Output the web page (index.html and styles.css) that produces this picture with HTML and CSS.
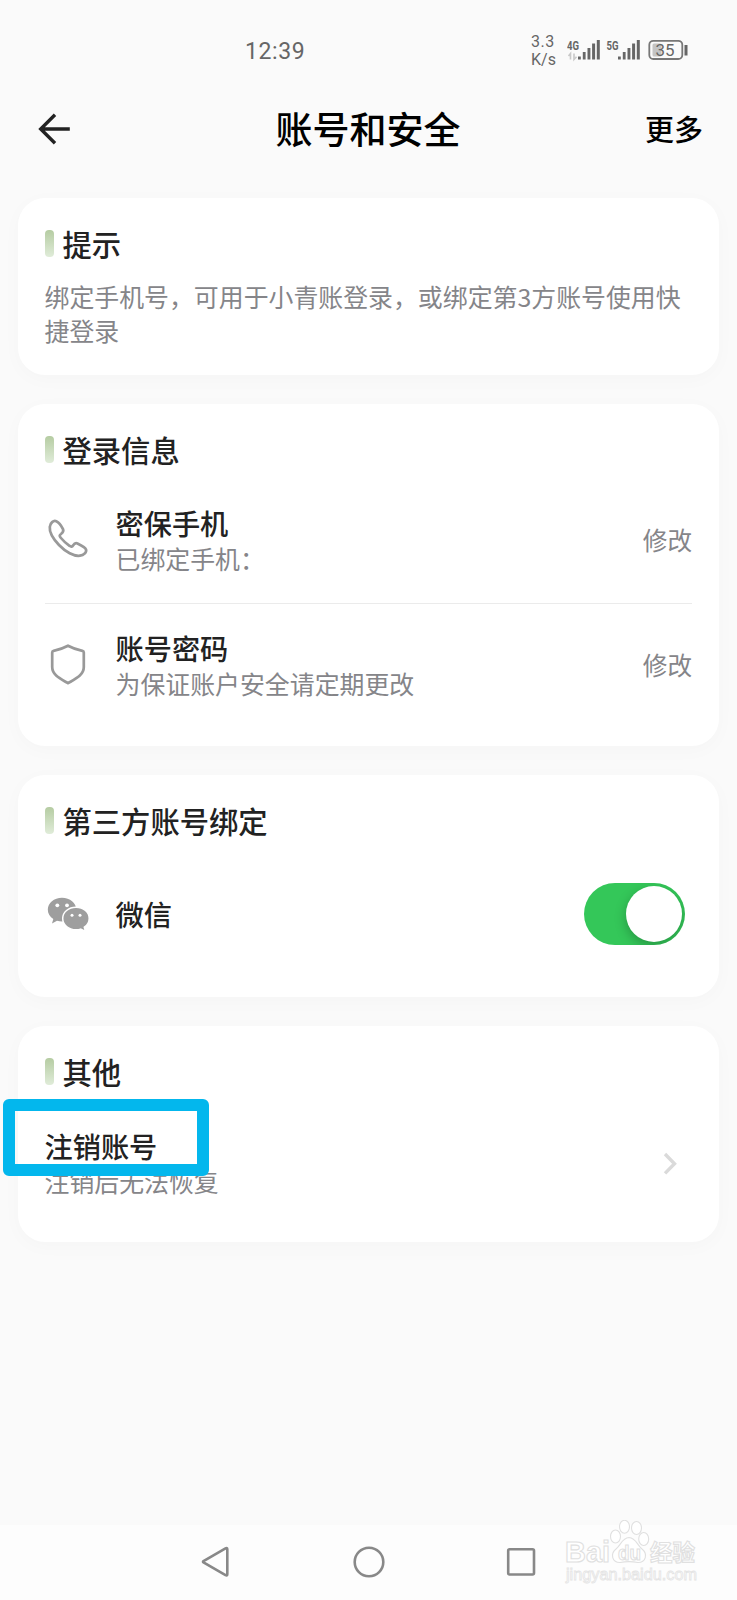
FILE: index.html
```html
<!DOCTYPE html>
<html lang="zh-CN">
<head>
<meta charset="utf-8">
<title>账号和安全</title>
<link rel="stylesheet" href="styles.css">
</head>
<body>
<div class="screen">
  <div class="status">
    <span class="clock">12:39</span>
    <div class="speed"><span class="wide">3.3</span><span>K/s</span></div>
    <svg class="signals" width="160" height="24" viewBox="0 0 160 24">
      <g fill="#666">
        <text class="net" x="0" y="10.5" textLength="12" lengthAdjust="spacingAndGlyphs">4G</text>
        <path d="M11 17.500h2.800v3h-2.800zM15.800 13h2.800v7.500h-2.800zM20.500 9h2.900v11.500h-2.900zM25.100 4.500h3v16h-3zM29.800 1h3v19.500h-3z"/>
        <text class="net" x="39.500" y="10.500" textLength="12" lengthAdjust="spacingAndGlyphs">5G</text>
        <path d="M51 17.500h2.800v3h-2.800zM55.800 13h2.800v7.500h-2.800zM60.500 9h2.900v11.500h-2.900zM65.100 4.500h3v16h-3zM69.800 1h3v19.500h-3z"/>
        <rect x="117.500" y="6" width="3" height="10.500"/>
      </g>
      <path d="M3.500 20.500v-6l-2 2.500M7 14.500v6l2.500-2.700" fill="none" stroke="#c9c9c9" stroke-width="1.600"/>
      <rect x="85.500" y="4.500" width="9" height="13" rx="1.500" fill="#c4c4c4"/>
      <rect x="82.300" y="1.800" width="33" height="18.200" rx="4" fill="none" stroke="#777" stroke-width="1.800"/>
      <text class="level" x="88.500" y="17" textLength="19" lengthAdjust="spacingAndGlyphs">35</text>
    </svg>
  </div>

  <header class="titlebar">
    <svg class="back" width="34" height="34" viewBox="0 0 34 34"><path d="M18 2.800L3.700 17l14.300 14.200M3.500 17h29.300" fill="none" stroke="#222" stroke-width="3.400"/></svg>
    <h1>账号和安全</h1>
    <span class="more">更多</span>
  </header>

  <main class="cards">
    <section class="card card-tip">
      <h2>提示</h2>
      <p class="tip">绑定手机号，可用于小青账登录，或绑定第3方账号使用快捷登录</p>
    </section>

    <section class="card card-login">
      <h2>登录信息</h2>
      <div class="row ruled">
        <svg class="icon" width="46" height="46" viewBox="0 0 46 46"><path d="M11.300 4.300C8.500 3 5.200 6 4.800 9.800C4.300 14 7.500 21 14 28C20.500 34.800 29 39.600 35 38.700C38.500 38.100 42 35.500 41 32.500C40 30 35.500 28 32.500 26.500C30.500 25.500 29.300 26.500 28 28.500C27.300 29.700 26 30 24.500 28.800C21 26.500 18 23.500 15.500 20.500C14.300 19 14.500 18 16 17C18 15.500 19 14.300 18 12.200C16.500 9.200 13.500 5.300 11.300 4.300Z"/></svg>
        <div class="label"><b>密保手机</b><span>已绑定手机：</span></div>
        <span class="edit">修改</span>
      </div>
      <div class="row last">
        <svg class="icon" width="46" height="46" viewBox="0 0 46 46"><path d="M23 3.800C19 6 13 8 8.600 8.800Q7.200 9.100 7.200 10.500V25C7.200 33 15 36.500 23 41.200C31 36.500 38.800 33 38.800 25V10.500Q38.800 9.100 37.400 8.800C33 8 27 6 23 3.800Z"/></svg>
        <div class="label"><b>账号密码</b><span>为保证账户安全请定期更改</span></div>
        <span class="edit">修改</span>
      </div>
    </section>

    <section class="card card-bind">
      <h2>第三方账号绑定</h2>
      <div class="row">
        <svg class="icon solid" width="46" height="46" viewBox="0 0 46 46">
          <path d="M17 6.700C9 6.700 2.800 12 2.800 18.500C2.800 22.500 5 26 8.300 28L7 32.500L12 29.700C13.600 30.200 15.300 30.400 17 30.400C25 30.400 31.300 25 31.300 18.500S25 6.700 17 6.700Z"/>
          <path class="front" d="M31 16.300C23.500 16.300 17.700 21.200 17.700 27.500S23.500 38.800 31 38.800C32.600 38.800 34.200 38.600 35.600 38.100L40.500 40.500L39.300 36.200C42.300 34.200 44.200 31 44.200 27.500C44.200 21.200 38.500 16.300 31 16.300Z"/>
          <g fill="#fff"><circle cx="12.300" cy="14.300" r="1.900"/><circle cx="22" cy="14.300" r="1.900"/><circle cx="27" cy="24.300" r="1.500"/><circle cx="35" cy="24.300" r="1.500"/></g>
        </svg>
        <div class="label"><b>微信</b></div>
        <span class="toggle"><i></i></span>
      </div>
    </section>

    <section class="card card-other">
      <h2>其他</h2>
      <div class="row plain">
        <div class="label"><b>注销账号</b><span>注销后无法恢复</span></div>
        <svg class="chevron" width="20" height="26" viewBox="0 0 20 26"><path d="M5 4l9.500 9.700L5 23.400" fill="none" stroke="#dadada" stroke-width="3.400"/></svg>
      </div>
      <div class="marker"></div>
    </section>
  </main>

  <nav class="navbar">
    <svg width="36" height="36" viewBox="0 0 36 36"><path d="M4.500 18.500Q3.500 17.800 4.500 17.100L26.500 4.400Q28.300 3.500 28.300 5.300V30.300Q28.300 32.100 26.500 31.200Z"/></svg>
    <svg width="36" height="36" viewBox="0 0 36 36"><circle cx="18" cy="18" r="14.300"/></svg>
    <svg width="36" height="36" viewBox="0 0 36 36"><rect x="5.200" y="5.200" width="25.800" height="25.300" rx="1.500"/></svg>
    <svg class="watermark" width="140" height="70" viewBox="0 0 140 70">
      <g class="outline">
        <text x="1" y="41.500" font-size="30" textLength="45" lengthAdjust="spacingAndGlyphs">Bai</text>
        <ellipse cx="51.500" cy="16.500" rx="5" ry="6.500"/><ellipse cx="60.500" cy="6.800" rx="5" ry="6.500"/><ellipse cx="72.500" cy="8" rx="5" ry="6.500"/><ellipse cx="79.700" cy="19" rx="5" ry="6.500"/>
        <path d="M65 17.500C58 18 57 25 52 29C46 34 48 42.500 56 42.500C61 41.500 69 41.500 74 42.500C82 42.500 84 34 78 29C73 25 72 18 65 17.500Z"/>
        <text x="54" y="39.500" font-size="21" textLength="23" lengthAdjust="spacingAndGlyphs">du</text>
        <text x="86" y="41" font-size="23" textLength="45" lengthAdjust="spacingAndGlyphs">经验</text>
        <text class="url" x="2" y="59.500" font-size="16" textLength="131" lengthAdjust="spacingAndGlyphs">jingyan.baidu.com</text>
      </g>
    </svg>
  </nav>
</div>
</body>
</html>
```
FILE: styles.css
```css
* { box-sizing: border-box; }
body {
  margin: 0;
  background: #fafafa;
  color: #222;
  font-family: "Noto Sans CJK SC", sans-serif;
}
.screen {
  width: 737px;
  height: 1600px;
  overflow: hidden;
  display: flex;
  flex-direction: column;
}
h1, h2, p { margin: 0; }

/* status bar */
.status {
  height: 84px;
  padding: 33px 0 0 245px;
  display: flex;
  align-items: flex-start;
  font-family: Roboto, sans-serif;
  color: #666;
}
.clock { width: 286px; font-size: 23px; line-height: 37px; letter-spacing: 0.600px; }
.speed {
  width: 36px;
  display: flex;
  flex-direction: column;
  font-size: 16px;
  line-height: 18px;
}
.wide { letter-spacing: 0.500px; }
.signals { margin-top: 6px; }
.net { font: bold 12px Roboto, sans-serif; }
.level { font: 400 17px Roboto, sans-serif; fill: #666; }

/* title bar */
.titlebar {
  height: 90px;
  padding: 0 34px 0 37px;
  display: grid;
  grid-template-columns: 120px 1fr 124px;
  align-items: center;
  color: #000;
}
.titlebar h1 {
  font-size: 37px;
  font-weight: 500;
  line-height: 50px;
  text-align: center;
  margin-top: -3px;
}
.more { font-size: 29px; font-weight: 500; line-height: 40px; text-align: right; margin-top: -2px; }

/* cards */
.cards {
  flex: 1;
  padding: 24px 18px 0;
  display: flex;
  flex-direction: column;
  gap: 29px;
}
.card {
  position: relative;
  padding: 25px 27px 0 26.500px;
  background: #fff;
  border-radius: 27px;
  box-shadow: 0 4px 20px rgba(0, 0, 0, 0.025);
}
.card-tip { height: 177px; }
.card-login { height: 341.500px; }
.card-bind { height: 222.500px; }
.card-other { height: 216px; }
.card h2 {
  display: flex;
  align-items: center;
  gap: 9px;
  font-size: 29.300px;
  font-weight: 500;
  line-height: 40px;
}
.card h2::before {
  content: "";
  width: 9px;
  height: 27px;
  margin-top: 1px;
  border-radius: 4px;
  background: linear-gradient(#b5cca2, #e0ecd9);
}
.tip { margin: 16px -10px 0 0; font-size: 24.900px; line-height: 34px; color: #858589; }
.row {
  height: 125.500px;
  margin-top: 9px;
  display: flex;
  align-items: center;
}
.row + .row { margin-top: 0; }
.last { padding-bottom: 2px; }
.card-bind .row { margin-top: 12px; }
.ruled { border-bottom: 1px solid #ebebeb; }
.icon { width: 46px; height: 46px; margin: 0 25px 0 0; fill: none; stroke: #999; stroke-width: 2.700; }
.solid { fill: #9e9e9e; stroke: none; }
.front { stroke: #fff; stroke-width: 1.500; }
.label { flex: 1; display: flex; flex-direction: column; }
.label b { font-size: 28.200px; font-weight: 500; line-height: 36px; }
.label span { font-size: 24.900px; line-height: 34px; color: #858589; }
.edit { margin-bottom: 3px; font-size: 24.600px; line-height: 34px; color: #858589; }
.toggle {
  width: 101px;
  height: 62px;
  margin-right: 7px;
  padding: 3px;
  display: flex;
  justify-content: flex-end;
  border-radius: 31px;
  background: #34c759;
  overflow: hidden;
}
.toggle i {
  width: 56px;
  height: 56px;
  border-radius: 50%;
  background: #fff;
  box-shadow: 0 4px 12px rgba(0, 0, 0, 0.25);
}
.chevron { margin-right: 12px; }
.marker {
  position: absolute;
  left: -15px;
  top: 73px;
  width: 206px;
  height: 77px;
  border: 12px solid #03b7ed;
  border-radius: 6px;
}

/* navigation bar */
.navbar {
  position: relative;
  height: 75px;
  padding: 0 198px 2px 199px;
  display: flex;
  align-items: center;
  justify-content: space-between;
  background: #fdfdfd;
}
.navbar svg { fill: none; stroke: #888; stroke-width: 2.600; }
.navbar .watermark { position: absolute; left: 564px; top: -5px; }
.watermark .outline { fill: #fff; stroke: #e0e0e0; stroke-width: 1.100; }
.watermark text { font-family: "Liberation Sans", "Noto Sans CJK SC", sans-serif; font-weight: bold; }
.watermark .url { font-weight: normal; stroke-width: 0.800; stroke: #e4e4e4; }
```
